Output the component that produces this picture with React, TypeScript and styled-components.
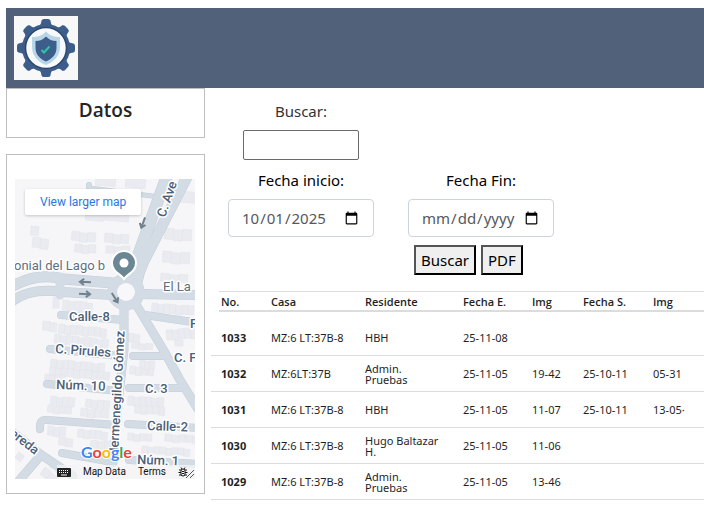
import React from "react";
import styled, { createGlobalStyle } from "styled-components";

const GlobalStyle = createGlobalStyle`
  *, *::before, *::after { box-sizing: border-box; }
  body {
    margin: 0;
    background: #fff;
    color: #212529;
    font-family: "Segoe UI", "Noto Sans", sans-serif;
    font-size: 15px;
    line-height: 24px;
  }
`;

const Page = styled.div`
  padding: 8px 0 8px 6px;
`;

const Header = styled.header`
  display: flex;
  align-items: center;
  padding: 8px;
  background: #51617a;
`;

const LogoSvg = styled.svg`
  display: block;
  width: 64px;
  height: 64px;
`;

const Columns = styled.div`
  display: flex;
  align-items: flex-start;
  gap: 6px;
`;

const Sidebar = styled.aside`
  display: flex;
  flex-direction: column;
  flex: 0 0 199px;
  gap: 16px;
`;

const Panel = styled.section<{ $pad: string }>`
  padding: ${(p) => p.$pad};
  border: 1px solid #bfbfbf;
`;

const PanelTitle = styled.h5`
  margin: 0;
  font-family: "Open Sans", "Noto Sans", sans-serif;
  font-size: 19px;
  font-weight: 600;
  line-height: 24px;
  text-align: center;
`;

const MapFrame = styled.div`
  position: relative;
  height: 300px;
  overflow: hidden;
  background: #f6f5f7;
  font-family: Roboto, sans-serif;
`;

const MapSvg = styled.svg`
  display: block;
  width: 100%;
  height: 100%;
  font-family: Roboto, sans-serif;
`;

const LargerMapLink = styled.a`
  position: absolute;
  top: 10px;
  left: 10px;
  padding: 0 15px;
  border-radius: 2px;
  background: #fff;
  box-shadow: 0 1px 3px rgba(0, 0, 0, 0.2);
  color: #2a76e4;
  font-size: 12px;
  line-height: 26px;
  text-decoration: none;
  white-space: nowrap;
`;

const MapFooter = styled.div`
  position: absolute;
  right: 0;
  bottom: 0;
  display: flex;
  align-items: center;
  gap: 12px;
  height: 14px;
  padding-right: 7px;
  background: rgba(245, 245, 245, 0.7);
  color: #111;
  font-size: 10px;
  line-height: 14px;
`;

const FooterButton = styled.button`
  display: flex;
  padding: 0;
  border: 0;
  background: none;
  color: inherit;
  font: inherit;
`;

const FooterLink = styled.a`
  color: inherit;
  text-decoration: none;
`;

const Main = styled.main`
  flex: 1;
  min-width: 0;
`;

const Filters = styled.form`
  display: grid;
  grid-template-columns: 180px 180px;
  row-gap: 8px;
  padding-top: 11px;
`;

const Field = styled.div<{ $column: number }>`
  display: flex;
  flex-direction: column;
  align-items: center;
  gap: 7px;
  grid-column: ${(p) => p.$column};
`;

const Label = styled.label<{ $strong?: boolean }>`
  color: ${(p) => (p.$strong ? "#000" : "#333")};
`;

const SearchInput = styled.input`
  width: 116px;
  height: 30px;
  padding: 1px 2px;
  border: 1px solid #6b6b6b;
  border-radius: 2px;
  font: inherit;
`;

const DateInput = styled.input`
  width: 146px;
  height: 38px;
  padding: 6px 12px;
  border: 1px solid #ced4da;
  border-radius: 4px;
  background: #fff;
  color: #55595c;
  font: inherit;
`;

const Actions = styled.div`
  grid-column: 2;
  display: flex;
  gap: 5px;
  padding-left: 23px;
`;

const ActionButton = styled.button`
  height: 30px;
  padding: 1px 5px;
  border: 2px outset #000;
  background: #efefef;
  color: #000;
  font: inherit;
`;

const Table = styled.table`
  width: 100%;
  margin-top: 16px;
  border-collapse: separate;
  border-spacing: 0;
  table-layout: fixed;
  color: #1f1f1f;
  font-size: 11px;
  line-height: 11px;
`;

const Col = styled.col<{ $w?: number }>`
  width: ${(p) => (p.$w ? `${p.$w}px` : "auto")};
`;

const Head = styled.thead`
  background:
    linear-gradient(#dcdcdc, #dcdcdc) 8px 0 / 100% 1px no-repeat,
    linear-gradient(#dcdcdc, #dcdcdc) 8px 100% / 100% 2px no-repeat;
`;

const HeadCell = styled.th`
  height: 21px;
  padding: 0 0 0 10px;
  font-family: "Open Sans", "Noto Sans", sans-serif;
  font-weight: 600;
  text-align: left;
  white-space: nowrap;
`;

const Row = styled.tr<{ $first?: boolean }>`
  height: ${(p) => (p.$first ? 44 : 36)}px;

  & > * {
    padding: ${(p) => (p.$first ? 8 : 0)}px 0 0 10px;
    border-bottom: 1px solid #dcdcdc;
    text-align: left;
  }
`;

const Cell = styled.td`
  white-space: pre-line;
`;

const records = [
  ["1033", "MZ:6 LT:37B-8", "HBH", "25-11-08", "", "", ""],
  ["1032", "MZ:6LT:37B", "Admin.\nPruebas", "25-11-05", "19-42", "25-10-11", "05-31"],
  ["1031", "MZ:6 LT:37B-8", "HBH", "25-11-05", "11-07", "25-10-11", "13-05·"],
  ["1030", "MZ:6 LT:37B-8", "Hugo Baltazar\nH.", "25-11-05", "11-06", "", ""],
  ["1029", "MZ:6 LT:37B-8", "Admin.\nPruebas", "25-11-05", "13-46", "", ""],
];

const columns = [
  { name: "No.", width: 50 },
  { name: "Casa", width: 94 },
  { name: "Residente", width: 98 },
  { name: "Fecha E.", width: 69 },
  { name: "Img", width: 51 },
  { name: "Fecha S.", width: 70 },
  { name: "Img" },
];

function Logo() {
  return (
    <LogoSvg viewBox="0 0 64 64" role="img" aria-label="Logo">
      <rect width="64" height="64" fill="#f8f8f8" />
      <g fill="#3d5d8b">
        {[0, 45, 90, 135, 180, 225, 270, 315].map((a) => (
          <path
            key={a}
            transform={`rotate(${a} 32 32)`}
            d="M22 12 C26.500 10 27 8 27.500 4.500 Q28 3 30 3 H34 Q36 3 36.500 4.500 C37 8 37.500 10 42 12 Z"
          />
        ))}
        <circle cx="32" cy="32" r="24" />
      </g>
      <circle cx="32" cy="32" r="20.500" fill="#f8f9fb" stroke="#2b4770" strokeWidth="1.500" />
      <path
        d="M32 15.500 C28 20 23 21 18 21 V31 C18 40 24 46 32 49 C40 46 46 40 46 31 V21 C41 21 36 20 32 15.500Z"
        fill="#b9d5e8"
      />
      <path
        d="M32 20.500 C29 23.500 26 25 21.500 25 V32 C21.500 38.500 26 43 32 45.500 C38 43 42.500 38.500 42.500 32 V25 C38 25 35 23.500 32 20.500Z"
        fill="#3d5d8b"
      />
      <path d="M27.500 34 L30 36.500 L35.500 30.500" fill="none" stroke="#2cc5a8" strokeWidth="2" />
    </LogoSvg>
  );
}

/* x, y, lot width, lot height, number of lots, tilt in degrees */
const lots: number[][] = [
  [81, -2, 20, 8, 1, 5], [111, -1, 20, 9, 1, 5], [165, 12, 20, 11, 1, 5],
  [71, 34, 18, 7, 1, 5], [90, 34, 24, 7, 1, 5],
  [16, 47, 8, 9, 1, 4], [18, 58, 8, 10, 2, 6],
  [57, 52, 8, 9, 3, 5], [60, 65, 7, 8, 3, 3], [90, 54, 8, 9, 3, 4], [91, 67, 8, 7, 3, 0],
  [150, 49, 9, 11, 3, 4], [148, 72, 9, 11, 3, 4], [146, 94, 9, 8, 3, 4],
  [38, 118, 6, 11, 1, 0], [48, 121, 6, 10, 5, 5],
  [28, 142, 7, 9, 2, 4], [44, 145, 6, 9, 8, 5], [40, 155, 6, 9, 9, 6],
  [113, 154, 6, 9, 2, 3], [117, 163, 7, 6, 3, 5],
  [137, 124, 6, 9, 7, 4], [151, 151, 6, 10, 5, -5], [160, 161, 8, 6, 1, 0],
  [36, 180, 6, 8, 9, 5], [35, 188, 6, 8, 10, 5], [115, 187, 6, 8, 4, 4], [125, 181, 5, 8, 3, 4],
  [30, 195, 5, 6, 4, 3], [36, 217, 6, 9, 4, 5], [71, 220, 6, 8, 4, 5],
  [33, 226, 6, 7, 4, 5], [66, 229, 7, 8, 4, 4],
  [113, 217, 6, 9, 6, 3], [120, 226, 6, 8, 5, 3],
  [33, 247, 6, 9, 3, 4], [44, 258, 7, 8, 2, 5], [63, 250, 6, 8, 5, 5], [76, 261, 7, 8, 3, 4],
  [113, 254, 6, 7, 4, 3], [150, 255, 7, 7, 5, 3], [127, 267, 6, 7, 8, 3],
  [4, 273, 7, 7, 1, 38], [38, 281, 8, 8, 2, 30], [30, 288, 8, 9, 2, 35],
];

const roads = [
  { d: "M153 -6 L121 82 Q113 93 108 106", w: 11 },
  { d: "M174 -6 L129 82 Q124 92 122 103", w: 10 },
  { d: "M74 16 V6", w: 5 },
  { d: "M74 9 L137 17", w: 4 },
  { d: "M-4 108 Q22 93 48 100 L98 104", w: 10 },
  { d: "M-4 123 Q15 108 48 113 L98 116", w: 9 },
  { d: "M125 115 L184 116", w: 9 },
  { d: "M122 127 L149 172 L165 201 L184 232", w: 8 },
  { d: "M130 136 L184 144", w: 7 },
  { d: "M46 136 L109 141", w: 7 },
  { d: "M109 128 V170 L103 225 L98 284", w: 8 },
  { d: "M35 170 L105 177", w: 7 },
  { d: "M118 177 H151", w: 7 },
  { d: "M32 205 L104 212", w: 7 },
  { d: "M114 209 H168", w: 7 },
  { d: "M25 250 Q24 240 32 241 L101 246", w: 7 },
  { d: "M113 245 L184 249", w: 7 },
  { d: "M47 274 L98 283", w: 7 },
  { d: "M114 281 L184 285", w: 7 },
  { d: "M-4 252 L25 275 L58 297", w: 8 },
  { d: "M26 276 L2 304", w: 8 },
];

const arrows = [
  { x: 128, y: 44, a: 110 },
  { x: 70, y: 103, a: 183 },
  { x: 70, y: 115, a: 3 },
  { x: 100, y: 119, a: 58 },
];

const RoadLabel = styled.text`
  fill: #4c6078;
  font-size: 13px;
  font-weight: 500;
  paint-order: stroke;
  stroke: #fff;
  stroke-width: 3px;
  stroke-linejoin: round;
`;

const PlaceLabel = styled(RoadLabel)`
  fill: #5e6f82;
  font-weight: 400;
`;

const Wordmark = styled.text`
  font-family: Lato, sans-serif;
  font-size: 16px;
  font-weight: 700;
  paint-order: stroke;
  stroke: #fff;
  stroke-width: 2px;
`;

function StreetMap() {
  return (
    <MapSvg viewBox="0 0 180 300" preserveAspectRatio="xMidYMid slice" role="img" aria-label="Mapa">
      <g fill="#eaebf0" stroke="#e2e3ea" strokeWidth="0.500">
        {lots.map(([x, y, w, h, n, tilt], i) => (
          <g key={i} transform={`translate(${x} ${y}) rotate(${tilt})`}>
            {Array.from({ length: n }, (_, k) => (
              <rect key={k} x={k * w} y={k % 3 === 1 ? 1 : 0} width={w} height={h} />
            ))}
          </g>
        ))}
      </g>
      <g fill="none" strokeLinecap="round" strokeLinejoin="round">
        {roads.map((r) => (
          <path key={r.d} d={r.d} stroke="#c3ced8" strokeWidth={r.w + 1} />
        ))}
        <circle cx="111" cy="113" r="13.500" stroke="#c3ced8" strokeWidth="10" />
        {roads.map((r) => (
          <path key={r.d} d={r.d} stroke="#d3dce4" strokeWidth={r.w} />
        ))}
        <path d="M45 98 V116" stroke="#d3dce4" strokeWidth="9" />
        <circle cx="111" cy="113" r="13.500" stroke="#d3dce4" strokeWidth="9" />
      </g>
      <circle cx="111" cy="113" r="9" fill="#f8f8fa" />
      <g fill="none" stroke="#71818f" strokeWidth="2">
        {arrows.map((a) => (
          <path
            key={a.y}
            transform={`translate(${a.x} ${a.y}) rotate(${a.a})`}
            d="M-6 0 H4 M1 -3 L5 0 L1 3"
          />
        ))}
      </g>
      <RoadLabel transform="translate(150 39) rotate(-71)">C. Ave</RoadLabel>
      <RoadLabel transform="translate(103 278) rotate(-87)">Hermenegildo Gómez</RoadLabel>
      <RoadLabel x="54" y="142">Calle-8</RoadLabel>
      <RoadLabel transform="translate(40 174) rotate(4)">C. Pirules</RoadLabel>
      <RoadLabel x="159" y="183">C. F</RoadLabel>
      <RoadLabel x="175" y="149">F</RoadLabel>
      <RoadLabel transform="translate(41 210) rotate(2)">Núm. 10</RoadLabel>
      <RoadLabel x="130" y="214">C. 3</RoadLabel>
      <RoadLabel transform="translate(132 251) rotate(2)">Calle-2</RoadLabel>
      <RoadLabel transform="translate(122 285) rotate(2)">Núm. 1</RoadLabel>
      <RoadLabel transform="translate(-6 256) rotate(38)">ereda</RoadLabel>
      <PlaceLabel x="-1" y="91">onial del Lago b</PlaceLabel>
      <PlaceLabel x="148" y="112">El La</PlaceLabel>
      <path
        d="M109 100 C106 95 97 93 97 84 A12 12 0 0 1 121 84 C121 93 112 95 109 100Z"
        fill="#6c8794"
        stroke="#fff"
        strokeWidth="2"
      />
      <circle cx="109" cy="84" r="4.500" fill="#fff" />
      <Wordmark x="66" y="279">
        <tspan fill="#4285f4">G</tspan>
        <tspan fill="#ea4335">o</tspan>
        <tspan fill="#fbbc05">o</tspan>
        <tspan fill="#4285f4">g</tspan>
        <tspan fill="#34a853">l</tspan>
        <tspan fill="#ea4335">e</tspan>
      </Wordmark>
    </MapSvg>
  );
}

function KeyboardIcon() {
  return (
    <svg width="14" height="9" viewBox="0 0 14 9" aria-hidden="true">
      <rect width="14" height="9" rx="1" fill="#222" />
      <path
        d="M2 2.500 H12 M2 4.500 H12"
        stroke="#fff"
        strokeWidth="1"
        strokeDasharray="1 1"
      />
      <path d="M4 7 H10" stroke="#fff" />
    </svg>
  );
}

function BugIcon() {
  return (
    <svg width="10" height="10" viewBox="0 0 10 10" aria-hidden="true">
      <path
        d="M1 3 H9 M0.500 5.500 H9.500 M1 8 H9 M3 0.500 L4 2 M7 0.500 L6 2"
        stroke="#111"
        strokeWidth="1"
      />
      <rect x="3" y="2" width="4" height="7" rx="2" fill="#fff" stroke="#111" />
      <path d="M4 4.500 H6 M4 6.500 H6" stroke="#111" />
    </svg>
  );
}

const ResizeGrip = styled.svg`
  position: absolute;
  right: 1px;
  bottom: 1px;
`;

export default function App() {
  return (
    <>
      <GlobalStyle />
      <Page>
        <Header>
          <Logo />
        </Header>
        <Columns>
          <Sidebar>
            <Panel $pad="9px 8px 15px">
              <PanelTitle>Datos</PanelTitle>
            </Panel>
            <Panel $pad="24px 9px 14px 8px">
              <MapFrame>
                <StreetMap />
                <LargerMapLink href="#map">View larger map</LargerMapLink>
                <MapFooter>
                  <FooterButton type="button" aria-label="Keyboard shortcuts">
                    <KeyboardIcon />
                  </FooterButton>
                  <FooterButton type="button">Map Data</FooterButton>
                  <FooterLink href="#terms">Terms</FooterLink>
                  <FooterButton type="button" aria-label="Report a problem">
                    <BugIcon />
                  </FooterButton>
                </MapFooter>
                <ResizeGrip width="8" height="8" viewBox="0 0 8 8" aria-hidden="true">
                  <path d="M0 8 L8 0 M4 8 L8 4" stroke="#555" />
                </ResizeGrip>
              </MapFrame>
            </Panel>
          </Sidebar>
          <Main>
            <Filters onSubmit={(e) => e.preventDefault()}>
              <Field $column={1}>
                <Label htmlFor="buscar">Buscar:</Label>
                <SearchInput id="buscar" type="text" />
              </Field>
              <Field $column={1}>
                <Label $strong htmlFor="inicio">Fecha inicio:</Label>
                <DateInput id="inicio" type="date" defaultValue="2025-10-01" />
              </Field>
              <Field $column={2}>
                <Label $strong htmlFor="fin">Fecha Fin:</Label>
                <DateInput id="fin" type="date" />
              </Field>
              <Actions>
                <ActionButton type="submit">Buscar</ActionButton>
                <ActionButton type="button">PDF</ActionButton>
              </Actions>
            </Filters>
            <Table>
              <colgroup>
                {columns.map((c, i) => (
                  <Col key={i} $w={c.width} />
                ))}
              </colgroup>
              <Head>
                <tr>
                  {columns.map((c, i) => (
                    <HeadCell key={i} scope="col">{c.name}</HeadCell>
                  ))}
                </tr>
              </Head>
              <tbody>
                {records.map(([id, ...rest], i) => (
                  <Row key={id} $first={i === 0}>
                    <th scope="row">{id}</th>
                    {rest.map((value, k) => (
                      <Cell key={k}>{value}</Cell>
                    ))}
                  </Row>
                ))}
              </tbody>
            </Table>
          </Main>
        </Columns>
      </Page>
    </>
  );
}
